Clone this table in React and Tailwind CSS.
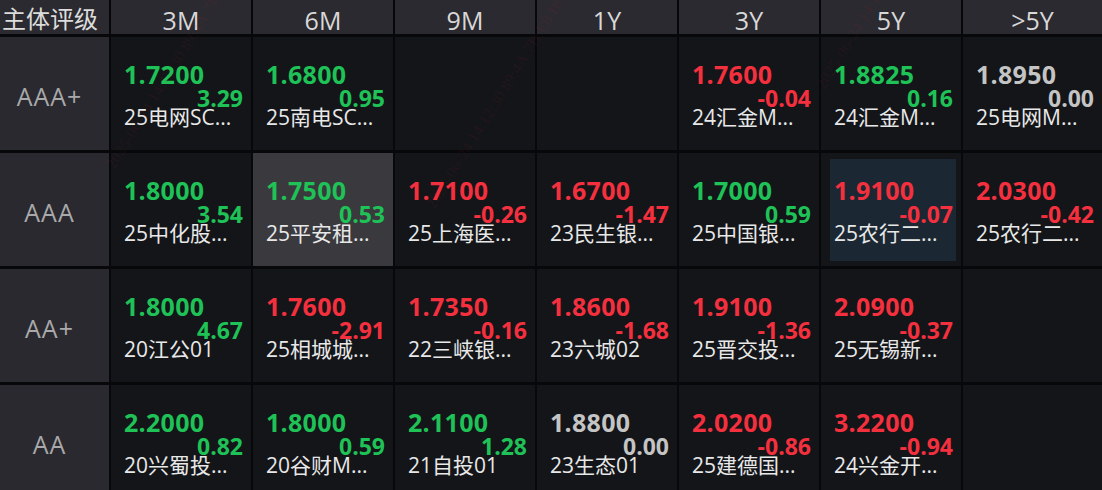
import React from "react";

const cols = ["3M", "6M", "9M", "1Y", "3Y", "5Y", ">5Y"];

const G = "g", R = "r", N = "n";
const rows = [
  {
    label: "AAA+",
    cells: [
      ["1.7200", "3.29", G, "25电网SC..."],
      ["1.6800", "0.95", G, "25南电SC..."],
      null,
      null,
      ["1.7600", "-0.04", R, "24汇金M..."],
      ["1.8825", "0.16", G, "24汇金M..."],
      ["1.8950", "0.00", N, "25电网M..."],
    ],
  },
  {
    label: "AAA",
    cells: [
      ["1.8000", "3.54", G, "25中化股..."],
      ["1.7500", "0.53", G, "25平安租...", "hover"],
      ["1.7100", "-0.26", R, "25上海医..."],
      ["1.6700", "-1.47", R, "23民生银..."],
      ["1.7000", "0.59", G, "25中国银..."],
      ["1.9100", "-0.07", R, "25农行二...", "sel"],
      ["2.0300", "-0.42", R, "25农行二..."],
    ],
  },
  {
    label: "AA+",
    cells: [
      ["1.8000", "4.67", G, "20江公01"],
      ["1.7600", "-2.91", R, "25相城城..."],
      ["1.7350", "-0.16", R, "22三峡银..."],
      ["1.8600", "-1.68", R, "23六城02"],
      ["1.9100", "-1.36", R, "25晋交投..."],
      ["2.0900", "-0.37", R, "25无锡新..."],
      null,
    ],
  },
  {
    label: "AA",
    cells: [
      ["2.2000", "0.82", G, "20兴蜀投..."],
      ["1.8000", "0.59", G, "20谷财M..."],
      ["2.1100", "1.28", G, "21自投01"],
      ["1.8800", "0.00", N, "23生态01"],
      ["2.0200", "-0.86", R, "25建德国..."],
      ["3.2200", "-0.94", R, "24兴金开..."],
      null,
    ],
  },
];

const FONT = { fontFamily: '"Open Sans", "Noto Sans CJK SC", sans-serif' };

function Cell({ data }) {
  if (!data) {
    return <div className="bg-[#131519]" />;
  }
  const [val, chg, tone, name, state] = data;
  const color =
    tone === G ? "text-[#1fc256]" : tone === R ? "text-[#f5303e]" : "text-[#c4c4c4]";
  const outer = state === "hover" ? "bg-[#3a393e]" : "bg-[#131519]";
  const inner = state === "sel" ? "bg-[#1b2833]" : "";
  return (
    <div className={`${outer} pt-[6px] pl-[9px] pr-[5px] pb-[5px]`}>
      <div className={`h-full ${inner} pl-[4px] pr-[3px] pt-[19px]`}>
        <div className={`${color} text-[25px] font-bold leading-[25px] tracking-[0.3px]`}>{val}</div>
        <div className={`${color} text-[23px] font-bold leading-[22px] text-right`}>{chg}</div>
        <div className="text-[#e8e8e8] text-[21px] leading-[24px] -mt-[4px] whitespace-nowrap">{name}</div>
      </div>
    </div>
  );
}

const marks = [
  { left: 120, top: 150 },
  { left: 440, top: 190 },
  { left: 830, top: 70 },
];

export default function App() {
  return (
    <div
      className="relative w-[1102px] h-[490px] overflow-hidden bg-[#07080a]"
      style={FONT}
    >
      <div className="grid grid-cols-[109px_repeat(6,140px)_1fr] grid-rows-[34px_113px_113px_113px_113px] gap-x-[2px] gap-y-[3px]">
        <div className="bg-[#2b2a30] flex items-center pl-[2px] pt-[4px] text-[24px] text-[#dcdcdc] leading-none whitespace-nowrap">
          主体评级
        </div>
        {cols.map((c) => (
          <div
            key={c}
            className="bg-[#2b2a30] flex items-center justify-center pt-[6px] text-[25px] text-[#d8d8d8] leading-none"
          >
            {c}
          </div>
        ))}
        {rows.map((r) => (
          <React.Fragment key={r.label}>
            <div className="bg-[#2a292f] flex items-center justify-center pr-[10px] pt-[5px] text-[25px] tracking-[1px] text-[#a9a9ab] leading-none">
              {r.label}
            </div>
            {r.cells.map((c, i) => (
              <Cell key={i} data={c} />
            ))}
          </React.Fragment>
        ))}
      </div>
      {marks.map((m, i) => (
        <div
          key={i}
          className="pointer-events-none absolute whitespace-nowrap font-['Liberation_Serif',serif] text-[16px] text-[#c02020]/10 origin-bottom-left -rotate-[58deg]"
          style={{ left: m.left, top: m.top }}
        >
          2025-06-24 14:12:30 89:4A:7B:E8:B9
        </div>
      ))}
    </div>
  );
}
